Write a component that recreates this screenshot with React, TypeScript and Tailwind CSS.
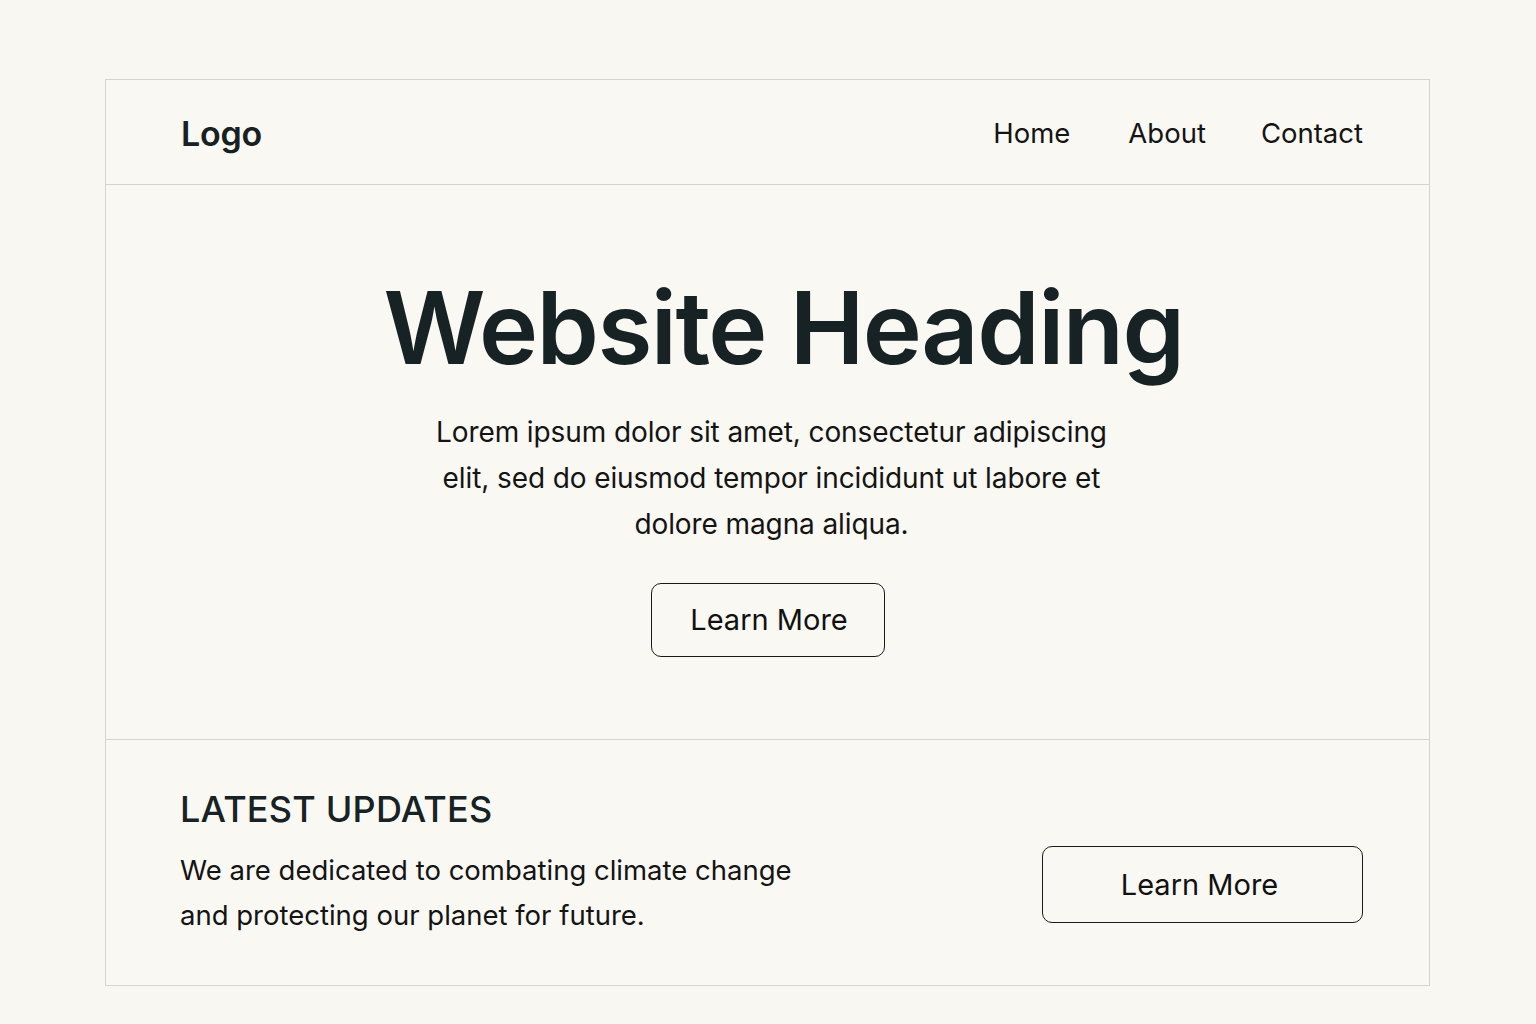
export default function App() {
  return (
    <div className="min-h-[1024px] w-full bg-[#f9f7f2] pt-[79px] pb-[38px] pl-[105px] pr-[106px]" style={{ fontFamily: "Inter, 'Noto Sans', sans-serif" }}>
      <div className="border border-[#d6d4cf] bg-[#faf8f3] flex flex-col">
        <header className="h-[105px] flex items-center justify-between pl-[75px] pr-[66px] border-b border-[#d6d4cf]">
          <div className="text-[34px] font-semibold text-[#172022] tracking-[-0.2px] mt-[2px]">Logo</div>
          <nav className="flex items-center text-[27.5px] text-[#141414] mt-[4px]">
            <span>Home</span>
            <span className="ml-[58px]">About</span>
            <span className="ml-[55px]">Contact</span>
          </nav>
        </header>
        <section className="h-[555px] flex flex-col items-center pt-[85px] border-b border-[#d6d4cf]">
          <h1 className="text-[100px] leading-[116px] font-semibold text-[#172224] tracking-[-1.5px] pl-[32px]">Website Heading</h1>
          <p className="mt-[23px] w-[700px] text-center text-[28px] leading-[46px] text-[#141414] tracking-[-0.1px] pl-[8px]">
            Lorem ipsum dolor sit amet, consectetur adipiscing elit, sed do eiusmod tempor incididunt ut labore et dolore magna aliqua.
          </p>
          <button className="mt-[36px] w-[234px] h-[74px] border-[1.5px] border-[#1a1a1a] rounded-[10px] text-[29px] text-[#111] pl-[3px]">Learn More</button>
        </section>
        <section className="h-[245px] flex items-start justify-between pl-[74px] pr-[66px] pt-[46px]">
          <div>
            <h2 className="text-[36px] leading-[46px] font-medium text-[#172224] tracking-[0.2px]">LATEST UPDATES</h2>
            <p className="mt-[16px] w-[640px] text-[27.5px] leading-[45px] text-[#141414]">
              We are dedicated to combating climate change and protecting our planet for future.
            </p>
          </div>
          <button className="mt-[60px] w-[321px] h-[77px] border-[1.5px] border-[#1a1a1a] rounded-[10px] text-[29px] text-[#111] pr-[6px]">Learn More</button>
        </section>
      </div>
    </div>
  );
}
